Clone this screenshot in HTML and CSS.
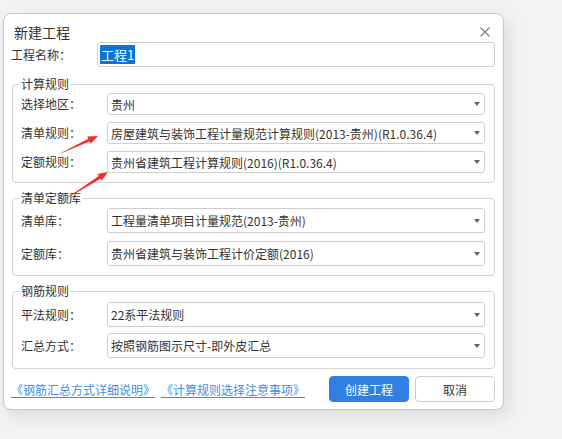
FILE: index.html
```html
<!DOCTYPE html>
<html lang="zh-CN">
<head>
<meta charset="utf-8">
<title>新建工程</title>
<link rel="stylesheet" href="styles.css">
</head>
<body>
<div class="dialog">
  <div class="header">
    <span class="title">新建工程</span>
    <svg class="close" width="10" height="10" viewBox="0 0 10 10"><path d="M0.5 0.5 L9.5 9.5 M9.5 0.5 L0.5 9.5" stroke="#7a7a7a" stroke-width="1.1" fill="none"/></svg>
  </div>
  <div class="name-row">
    <span class="label">工程名称：</span>
    <div class="input"><span class="sel">工程1</span></div>
  </div>

  <fieldset class="group g1">
    <legend>计算规则</legend>
    <div class="frow"><span class="label">选择地区：</span><div class="select s22"><span class="val">贵州</span><i class="caret"></i></div></div>
    <div class="frow"><span class="label">清单规则：</span><div class="select s22"><span class="val">房屋建筑与装饰工程计量规范计算规则(2013-贵州)(R1.0.36.4)</span><i class="caret"></i></div></div>
    <div class="frow"><span class="label">定额规则：</span><div class="select s22"><span class="val">贵州省建筑工程计算规则(2016)(R1.0.36.4)</span><i class="caret"></i></div></div>
  </fieldset>

  <fieldset class="group g2">
    <legend>清单定额库</legend>
    <div class="frow"><span class="label">清单库：</span><div class="select"><span class="val">工程量清单项目计量规范(2013-贵州)</span><i class="caret"></i></div></div>
    <div class="frow"><span class="label">定额库：</span><div class="select"><span class="val">贵州省建筑与装饰工程计价定额(2016)</span><i class="caret"></i></div></div>
  </fieldset>

  <fieldset class="group g3">
    <legend>钢筋规则</legend>
    <div class="frow"><span class="label">平法规则：</span><div class="select"><span class="val">22系平法规则</span><i class="caret"></i></div></div>
    <div class="frow"><span class="label">汇总方式：</span><div class="select"><span class="val">按照钢筋图示尺寸-即外皮汇总</span><i class="caret"></i></div></div>
  </fieldset>

  <div class="footer">
    <a class="link" href="#">《钢筋汇总方式详细说明》</a>
    <a class="link" href="#">《计算规则选择注意事项》</a>
    <span class="spacer"></span>
    <button class="btn primary">创建工程</button>
    <button class="btn">取消</button>
  </div>
</div>

<svg class="annot" width="562" height="439" viewBox="0 0 562 439">
  <polygon fill="#ee3124" points="57,155 88.3,138.8 87.2,136.6 98,136 90.6,143.8 89.5,141.6"/>
  <polygon fill="#ee3124" points="64,200 98.8,176.1 97.5,174.0 108,172 101.7,180.8 100.4,178.7"/>
</svg>
</body>
</html>
```

FILE: styles.css
```css
* { box-sizing: border-box; }
html, body { margin: 0; padding: 0; }
body {
  width: 562px;
  height: 439px;
  background: #f2f3f5;
  font-family: "Noto Sans CJK SC", "Noto Sans", sans-serif;
  font-size: 12px;
  color: #333;
  position: relative;
  overflow: hidden;
}
.dialog {
  margin: 13px 0 0 3px;
  width: 501px;
  height: 397px;
  background: #fff;
  border: 1px solid #c6c6c6;
  border-radius: 8px;
  box-shadow: 4px 6px 18px rgba(0,0,0,0.10);
  padding: 0 8px 0 7px;
  display: flex;
  flex-direction: column;
}
.header {
  display: flex;
  align-items: center;
  justify-content: space-between;
  padding-top: 8px;
  height: 28px;
}
.title {
  font-size: 14px;
  line-height: 20px;
  margin-left: 3px;
  color: #333;
}
.close { margin-right: 5px; display: block; }
.label { flex: none; line-height: 16px; color: #333; }
.name-row {
  display: flex;
  align-items: center;
  height: 25px;
}
.name-row .label { width: 86px; }
.input {
  flex: 1;
  height: 25px;
  border: 1px solid #cdcdcd;
  border-radius: 3px;
  padding: 2px 2px;
  display: flex;
  align-items: center;
}
.sel {
  background: #0a74d8;
  color: #fff;
  line-height: 19px;
  font-size: 13px;
  padding: 0 1px;
}
.group {
  margin: 0 0 0 1px;
  min-width: 0;
  border: 1px solid #d2d2d2;
  border-radius: 4px;
  padding: 0 9px 9px 8px;
  display: flex;
  flex-direction: column;
}
.group legend {
  font-size: 12px;
  line-height: 16px;
  padding: 0 1px;
  margin-left: -1px;
  color: #333;
}
.g1 { margin-top: 9px; padding-top: 1px; gap: 7px; }
.g2 { margin-top: 7px; padding-top: 2px; gap: 8px; }
.g3 { margin-top: 7px; padding-top: 3px; gap: 6px; padding-bottom: 10px; }
.frow {
  display: flex;
  align-items: center;
}
.frow .label { width: 86px; }
.select {
  flex: 1;
  height: 25px;
  border: 1px solid #cdcdcd;
  border-radius: 3px;
  padding: 0 4px 0 3px;
  display: flex;
  align-items: center;
}
.select.s22 { height: 22px; }
.val {
  flex: 1;
  white-space: nowrap;
  overflow: hidden;
  color: #333;
}
.caret {
  width: 0;
  height: 0;
  border-left: 3px solid transparent;
  border-right: 3px solid transparent;
  border-top: 4px solid #5f6670;
}
.footer {
  margin-top: 7px;
  display: flex;
  align-items: center;
  gap: 6px;
}
.link {
  color: #3d8de4;
  text-decoration: underline;
  text-underline-offset: 2px;
  line-height: 16px;
  margin-top: 2px;
}
.spacer { flex: 1; }
.btn {
  width: 80px;
  height: 26px;
  border: 1px solid #cdcdcd;
  border-radius: 4px;
  background: #fff;
  font-family: inherit;
  font-size: 12px;
  color: #333;
  padding: 0;
}
.btn.primary {
  background: #2f80e2;
  border-color: #2f80e2;
  color: #fff;
}
.annot {
  position: absolute;
  left: 0;
  top: 0;
  pointer-events: none;
}
```
